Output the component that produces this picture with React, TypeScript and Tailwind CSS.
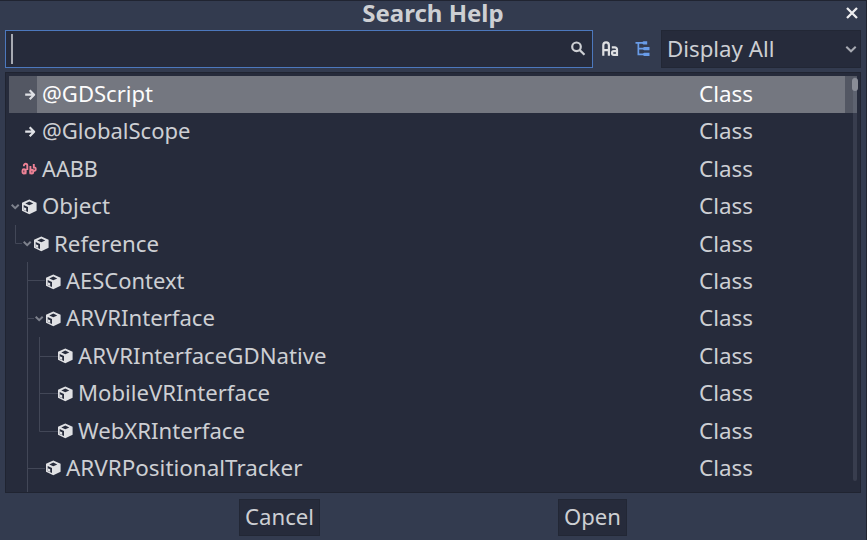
import React from "react";

type Kind = "arrow" | "aabb" | "cube";
type Item = { name: string; kind: Kind; indent: string; open?: boolean; width: number };

const items: Item[] = [
  { name: "@GDScript", kind: "arrow", indent: "pl-[13px]", width: 111 },
  { name: "@GlobalScope", kind: "arrow", indent: "pl-[13px]", width: 148.5 },
  { name: "AABB", kind: "aabb", indent: "pl-[13px]", width: 56 },
  { name: "Object", kind: "cube", indent: "pl-[13px]", open: true, width: 68 },
  { name: "Reference", kind: "cube", indent: "pl-[25px]", open: true, width: 105 },
  { name: "AESContext", kind: "cube", indent: "pl-[37px]", width: 118.5 },
  { name: "ARVRInterface", kind: "cube", indent: "pl-[37px]", open: true, width: 149 },
  { name: "ARVRInterfaceGDNative", kind: "cube", indent: "pl-[49px]", width: 248.5 },
  { name: "MobileVRInterface", kind: "cube", indent: "pl-[49px]", width: 192 },
  { name: "WebXRInterface", kind: "cube", indent: "pl-[49px]", width: 167 },
  { name: "ARVRPositionalTracker", kind: "cube", indent: "pl-[37px]", width: 236.5 },
];

function KindIcon({ kind }: { kind: Kind }) {
  if (kind === "arrow")
    return (
      <svg className="h-4 w-4 shrink-0" viewBox="0 0 16 16" fill="none" stroke="#e0e2e6" strokeWidth="2.200">
        <path d="M4.200 7.700h8.500M8.700 3.200l4.400 4.500-4.400 4.500" strokeLinejoin="round" />
      </svg>
    );
  if (kind === "aabb")
    return (
      <svg className="h-4 w-4 shrink-0" viewBox="0 0 16 16" fill="none" stroke="#ee8296" strokeWidth="1.900">
        <rect x="1.500" y="8.300" width="3" height="4.200" rx="1.400" />
        <path d="M4.500 8v5.200M2.900 5.200V4.500a1.700 1.700 0 0 1 3.400 0v4.600" />
        <path d="M9.400 5v8.200" />
        <rect x="9.400" y="8.700" width="2.800" height="3.800" rx="1.300" />
        <path d="M12.800 3v3.500h.8c1.600 0 1.600 3.200 0 3.200h-.9" />
      </svg>
    );
  return (
    <svg className="h-4 w-4 shrink-0" viewBox="0 0 16 16">
      <path
        fill="#e0e1e4"
        fillRule="evenodd"
        d="M8.300.5 15.600 3.800v8L8.300 15.300 1 11.800v-8ZM8.300 2.600 4.300 4.500l4 1.800 4-1.800ZM2.700 6v4.900l4.300 2V7.900Z"
      />
      <path fill="#e0e1e4" d="m2.700 8.200 2.500 1.100v2.600l-2.500-1.100Z" />
    </svg>
  );
}

function Chevron() {
  return (
    <svg className="absolute -left-[12px] top-[4px] h-2 w-3" viewBox="0 0 12 8" fill="none" stroke="#7e828d" strokeWidth="2">
      <path d="m2.700 1.700 3.500 3.400 3.500-3.400" />
    </svg>
  );
}

function Label({ text, width, baseline = 26 }: { text: string; width: number; baseline?: number }) {
  return (
    <svg className="h-[37px] shrink-0 overflow-visible" width={width} fill="currentColor">
      <text x="0" y={baseline} textLength={width} lengthAdjust="spacingAndGlyphs">{text}</text>
    </svg>
  );
}

export default function App() {
  return (
    <div className="flex h-[540px] w-[867px] flex-col overflow-hidden border-t border-r border-[#202431] bg-[#333b4f] pr-[5px] pl-[5px] font-['Noto_Sans',sans-serif] text-[22.500px] text-[#cdcfd3]">
      <header className="relative flex h-[29px] shrink-0 items-start justify-center">
        <h1 className="text-[24px] leading-[24px] font-bold whitespace-nowrap">Search Help</h1>
        <svg className="absolute top-[5px] right-[2px] h-[14px] w-[14px]" viewBox="0 0 14 14" fill="none" stroke="#eeeef0" strokeWidth="2.300">
          <path d="m2 2 10 10M12 2 2 12" />
        </svg>
      </header>

      <div className="flex h-[38px] shrink-0">
        <div className="flex w-[588px] items-center justify-between border border-[#4c78bd] bg-[#262b3b] pr-[6px] pl-[5px]">
          <span className="h-[30px] w-[2px] bg-[#a7aab2]" />
          <svg className="h-4 w-4" viewBox="0 0 16 16" fill="none" stroke="#cdcfd3" strokeWidth="2.200">
            <circle cx="6.500" cy="5.800" r="4.300" />
            <path d="m9.500 8.900 5 4.800" />
          </svg>
        </div>
        <svg className="mt-[10px] ml-[9px] h-[18px] w-[17px]" viewBox="0 0 17 18" fill="none" stroke="#dedfe2" strokeWidth="2.200">
          <path d="M1.300 15.800V5.200a2.800 2.800 0 0 1 5.600 0v10.600M1.300 10.200h5.600" />
          <path d="M9.800 7.300h3a2.200 2.200 0 0 1 2.200 2.200v5.300h-3.200a1.800 1.800 0 0 1 0-3.600H15" />
        </svg>
        <svg className="mt-[11px] ml-[16px] h-4 w-4" viewBox="0 0 16 16" fill="#699ce8">
          <path d="M.5 1h6.800l1.200-.8h3.700v3.300H8.500L7.300 2.700H4.200v4.100h3.700l1.300-.8h5.300v3.300H9.200l-1.300-.8H4.200v4h3.700l1.300-.8h5.300V15H9.200l-1.300-.8H2.500V2.700h-2Z" />
        </svg>
        <div className="ml-auto flex w-[200px] items-center justify-between border border-[#222735] bg-[#262b3b] pr-[3px] pl-[5px]">
          <Label text="Display All" width={107.5} />
          <svg className="h-3 w-3" viewBox="0 0 12 12" fill="none" stroke="#a8abb3" strokeWidth="2">
            <path d="m1.300 3.700 4.700 4.600 4.700-4.600" />
          </svg>
        </div>
      </div>

      <main className="relative mt-1 h-[421px] w-[856px] shrink-0 overflow-hidden border border-[#202431] bg-[#262b3b]">
        <svg className="absolute top-0 left-0 h-full w-full" viewBox="6 73 854 419" fill="none" stroke="#424757" strokeWidth="1">
          <path d="M15.500 225v18.500H22M27.500 262v230M27.500 280.500H45M27.500 318.500H34M27.500 468.500H45M39.500 337v94.500H58M39.500 356.500H58M39.500 393.500H58" />
        </svg>
        <div className="relative ml-[3px] flex w-[848px] flex-col pt-[2.900px]">
          {items.map((item, i) => (
            <div
              key={item.name}
              className={
                "flex h-[37.400px] shrink-0 items-center " +
                (i === 0 ? "bg-[linear-gradient(90deg,#535763_28px,#747780_28px,#747780_836px,#535763_836px)] text-[#fcfcfc]" : "")
              }
            >
              <div className={"flex w-[690px] items-center " + item.indent}>
                <div className="relative mr-[4.500px] -ml-px shrink-0">
                  {item.open && <Chevron />}
                  <KindIcon kind={item.kind} />
                </div>
                <Label text={item.name} width={item.width} baseline={26.35} />
              </div>
              <Label text="Class" width={54} baseline={26.35} />
            </div>
          ))}
        </div>
        <div className="absolute top-[4px] right-[3px] h-[404px] w-[4px] rounded-sm bg-[#a0a8bf]/15" />
        <div className="absolute top-[5px] right-[2px] h-[13px] w-[6px] rounded-[3px] bg-[#8a8d97]" />
      </main>

      <footer className="flex shrink-0 pt-[6px]">
        <button className="ml-[234px] flex h-[37px] w-[81px] items-center justify-center border border-[#222735] bg-[#262b3b]">
          <Label text="Cancel" width={69} />
        </button>
        <button className="ml-[238px] flex h-[37px] w-[69px] items-center justify-center border border-[#222735] bg-[#262b3b]">
          <Label text="Open" width={57} />
        </button>
      </footer>
    </div>
  );
}
